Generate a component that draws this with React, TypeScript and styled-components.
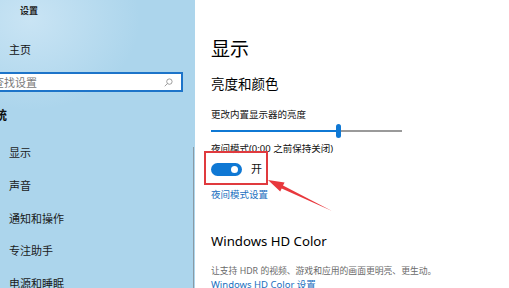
import React from 'react';
import styled, {createGlobalStyle} from 'styled-components';

const GlobalStyle = createGlobalStyle`
  html, body {
    margin: 0;
    padding: 0;
    background: #ffffff;
  }

  body {
    font-family: "Noto Sans", "Noto Sans CJK SC", sans-serif;
    color: #111;
  }
`;

const navItems = ['显示', '声音', '通知和操作', '专注助手', '电源和睡眠'];

const SearchIcon = (): JSX.Element => (
    <svg width="9" height="9" viewBox="0 0 10 10" fill="none" stroke="#8a8a8a" strokeWidth="0.9">
        <circle cx="6" cy="4" r="3"/>
        <path d="M3.9 6.1 L0.8 9.2"/>
    </svg>
);

const Arrow = (): JSX.Element => (
    <ArrowSvg width="80" height="40" viewBox="262 176 80 40">
        <polygon
            points="268,180 284.6,182.5 283,185.6 332,211 281.7,188.4 280.2,191.5"
            fill="#e8383d"
        />
    </ArrowSvg>
);

const App = (): JSX.Element => {
    return (
        <>
            <GlobalStyle/>
            <Screen>
                <Sidebar>
                    <AppTitle>设置</AppTitle>
                    <HomeItem>主页</HomeItem>
                    <SearchBox>
                        <Placeholder>查找设置</Placeholder>
                        <SearchIcon/>
                    </SearchBox>
                    <GroupTitle>系统</GroupTitle>
                    <NavList>
                        {navItems.map((item) => (
                            <NavItem key={item}>{item}</NavItem>
                        ))}
                    </NavList>
                    <ScrollBar/>
                </Sidebar>
                <Content>
                    <PageTitle>显示</PageTitle>
                    <SectionTitle>亮度和颜色</SectionTitle>
                    <Label top={14}>更改内置显示器的亮度</Label>
                    <Slider>
                        <Track filled width={125}/>
                        <Thumb/>
                        <Track width={61}/>
                    </Slider>
                    <Label top={4}>夜间模式(0:00 之前保持关闭)</Label>
                    <ToggleRow>
                        <Toggle>
                            <Knob/>
                        </Toggle>
                        <ToggleText>开</ToggleText>
                    </ToggleRow>
                    <Link top={12}>夜间模式设置</Link>
                    <SectionTitle top={29} latin>Windows HD Color</SectionTitle>
                    <Description>让支持 HDR 的视频、游戏和应用的画面更明亮、更生动。</Description>
                    <Link top={0}>Windows HD Color 设置</Link>
                    <Highlight/>
                    <Arrow/>
                </Content>
            </Screen>
        </>
    );
};

const Screen = styled.div`
  display: flex;
  width: 509px;
  height: 288px;
  overflow: hidden;
  background: #ffffff;
`;

const Sidebar = styled.aside`
  position: relative;
  flex: 0 0 195px;
  display: flex;
  flex-direction: column;
  background: radial-gradient(ellipse 110px 90px at 30px 20px, #c9e4f4 0%, rgba(201, 228, 244, 0) 100%),
    #acd5ec;
`;

const AppTitle = styled.div`
  margin: 4px 0 0 20px;
  font-size: 9px;
  font-weight: 700;
  line-height: 14px;
  color: #222;
`;

const HomeItem = styled.div`
  margin: 24px 0 0 9px;
  font-size: 11px;
  line-height: 16px;
`;

const SearchBox = styled.div`
  display: flex;
  align-items: center;
  justify-content: space-between;
  margin: 14px 0 0 -12px;
  width: 195px;
  height: 21px;
  box-sizing: border-box;
  padding: 0 8px 0 3px;
  background: #ffffff;
  border: 2px solid #1d74c9;
`;

const Placeholder = styled.span`
  font-size: 11px;
  color: #7a7a7a;
`;

const GroupTitle = styled.div`
  margin: 16px 0 0 -17px;
  font-size: 12px;
  font-weight: 700;
  line-height: 16px;
`;

const NavList = styled.ul`
  display: flex;
  flex-direction: column;
  gap: 16.8px;
  margin: 21px 0 0 9px;
  padding: 0;
  list-style: none;
`;

const NavItem = styled.li`
  font-size: 11px;
  line-height: 16px;
  color: #1a1a1a;
`;

const ScrollBar = styled.div`
  position: absolute;
  right: 1px;
  top: 147px;
  bottom: 0;
  width: 1px;
  background: #8a9aa4;
`;

const Content = styled.main`
  position: relative;
  flex: 1;
  display: flex;
  flex-direction: column;
  align-items: flex-start;
  padding: 36px 0 0 16px;
  background: #ffffff;
`;

const PageTitle = styled.h1`
  margin: 0;
  font-size: 19px;
  font-weight: 400;
  line-height: 26px;
  color: #000;
`;

const SectionTitle = styled.h2<{top?: number; latin?: boolean}>`
  margin: ${(p) => p.top ?? 12}px 0 0;
  font-size: ${(p) => p.latin ? 13.2 : 13.5}px;
  font-weight: 400;
  line-height: 20px;
  color: #000;
`;

const Label = styled.div<{top?: number}>`
  margin: ${(p) => p.top ?? 11}px 0 0;
  font-size: 9.5px;
  line-height: 14px;
  color: #111;
`;

const Slider = styled.div`
  display: flex;
  align-items: center;
  height: 14px;
  margin-top: 2px;
`;

const Track = styled.div<{filled?: boolean; width: number}>`
  width: ${(p) => p.width}px;
  height: ${(p) => p.filled ? 2 : 1.5}px;
  background: ${(p) => p.filled ? '#0f78d4' : '#9a9a9a'};
`;

const Thumb = styled.div`
  width: 5px;
  height: 14px;
  border-radius: 3px;
  background: #0f78d4;
`;

const ToggleRow = styled.div`
  display: flex;
  align-items: center;
  gap: 9px;
  margin-top: 6px;
`;

const Toggle = styled.div`
  display: flex;
  align-items: center;
  justify-content: flex-end;
  width: 31px;
  height: 13px;
  box-sizing: border-box;
  padding-right: 4px;
  border-radius: 7px;
  background: #0f78d4;
`;

const Knob = styled.div`
  width: 7px;
  height: 7px;
  border-radius: 50%;
  background: #ffffff;
`;

const ToggleText = styled.span`
  font-size: 11px;
  line-height: 14px;
  color: #111;
`;

const Link = styled.div<{top?: number}>`
  margin-top: ${(p) => p.top ?? 0}px;
  font-size: 9.5px;
  line-height: 14px;
  color: #1a6fc0;
`;

const Description = styled.div`
  margin-top: 13px;
  font-size: 8.8px;
  line-height: 14px;
  color: #6a6a6a;
`;

const Highlight = styled.div`
  position: absolute;
  left: 9px;
  top: 151px;
  width: 64px;
  height: 34px;
  box-sizing: border-box;
  border: 2px solid #e03a3e;
`;

const ArrowSvg = styled.svg`
  position: absolute;
  left: 67px;
  top: 176px;
`;

export default App;
